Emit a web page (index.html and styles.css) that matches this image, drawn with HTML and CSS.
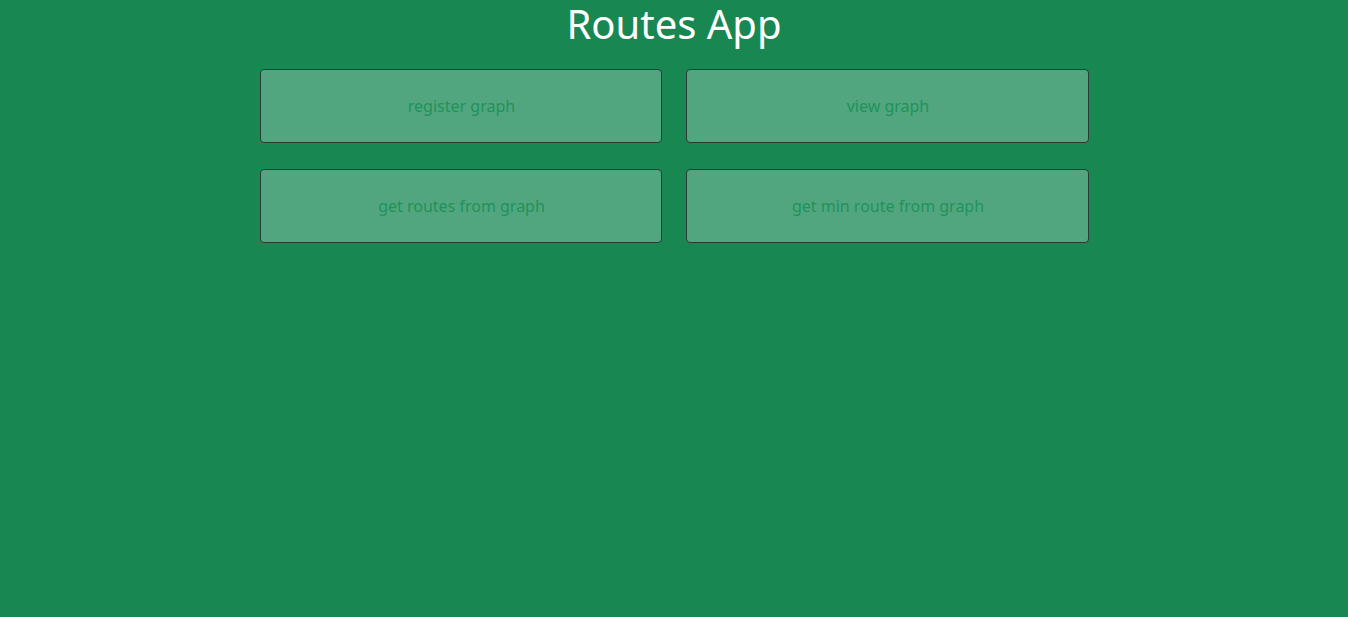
FILE: index.html
```html
<!DOCTYPE html>
<html lang="en">
<head>
<meta charset="utf-8">
<title>Routes App</title>
<link rel="stylesheet" href="styles.css">
</head>
<body>
<main class="app">
  <h1 class="title">Routes App</h1>
  <div class="menu">
    <button class="menu-btn">register graph</button>
    <button class="menu-btn">view graph</button>
    <button class="menu-btn">get routes from graph</button>
    <button class="menu-btn">get min route from graph</button>
  </div>
</main>
</body>
</html>
```
FILE: styles.css
```css
html, body {
  margin: 0;
  padding: 0;
  background: #188752;
  height: 100%;
}
body {
  font-family: "Noto Sans", "Open Sans", sans-serif;
}
.app {
  display: flex;
  flex-direction: column;
  align-items: center;
}
.title {
  margin: 0;
  font-weight: 400;
  font-size: 40px;
  line-height: 48px;
  color: #ffffff;
}
.menu {
  margin-top: 21px;
  width: 829px;
  display: grid;
  grid-template-columns: 402px 403px;
  column-gap: 24px;
  row-gap: 26px;
}
.menu-btn {
  height: 74px;
  background: #52a67f;
  border: 1px solid #2b3a33;
  border-radius: 4px;
  color: #20925c;
  font-family: "Noto Sans", "Open Sans", sans-serif;
  font-size: 16px;
  padding: 0 0 0 2px;
}
```
